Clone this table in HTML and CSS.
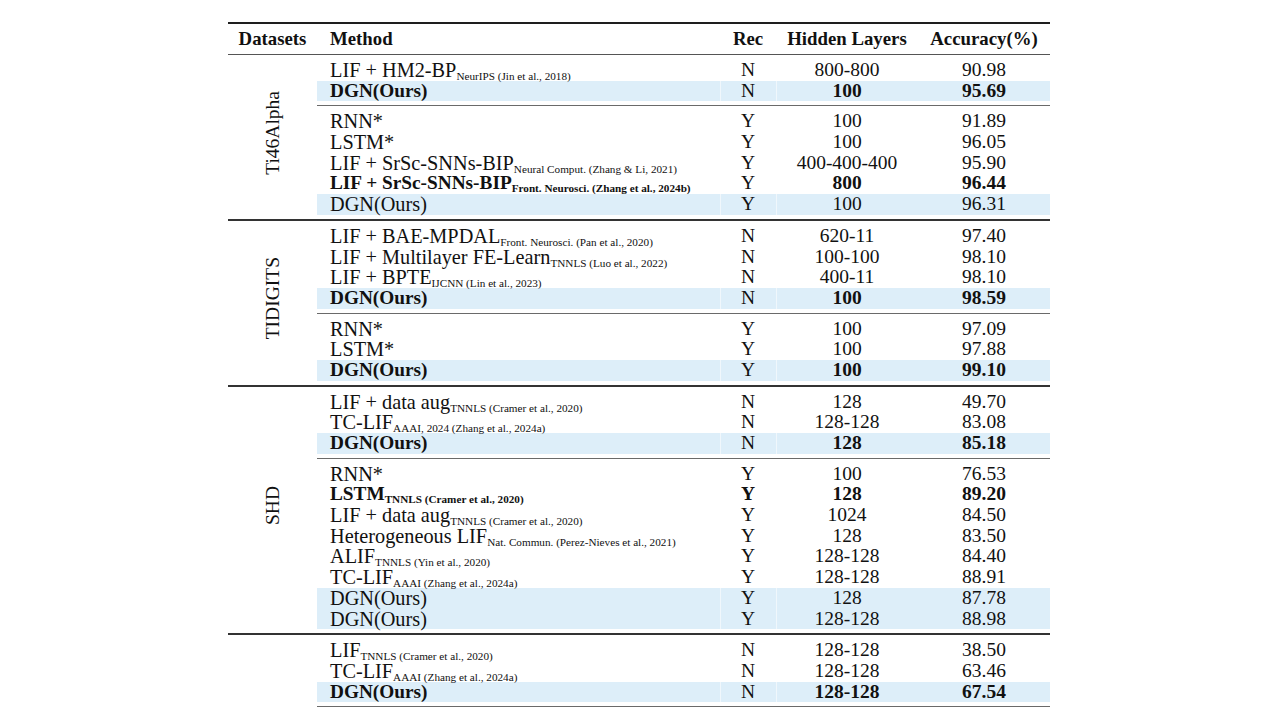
FILE: index.html
```html
<!DOCTYPE html>
<html>
<head>
<meta charset="utf-8">
<link rel="stylesheet" href="styles.css">
</head>
<body>
<div class="table">
  <div class="toprule"></div>
  <div class="head">
    <span class="c">Datasets</span>
    <span class="m">Method</span>
    <span class="c">Rec</span>
    <span class="c">Hidden Layers</span>
    <span class="c">Accuracy(%)</span>
  </div>
  <div class="midrule"></div>

  <div class="group">
    <div class="ds"><span>Ti46Alpha</span></div>
    <div class="body">
      <div class="block">
        <div class="row"><span class="m">LIF + HM2-BP<span class="ref">NeurIPS (Jin et al., 2018)</span></span><span class="c">N</span><span class="c">800-800</span><span class="c">90.98</span></div>
        <div class="row hl"><span class="m b">DGN(Ours)</span><span class="c">N</span><span class="c b">100</span><span class="c b">95.69</span></div>
      </div>
      <div class="cmid"></div>
      <div class="block">
        <div class="row"><span class="m">RNN*</span><span class="c">Y</span><span class="c">100</span><span class="c">91.89</span></div>
        <div class="row"><span class="m">LSTM*</span><span class="c">Y</span><span class="c">100</span><span class="c">96.05</span></div>
        <div class="row"><span class="m">LIF + SrSc-SNNs-BIP<span class="ref">Neural Comput. (Zhang &amp; Li, 2021)</span></span><span class="c">Y</span><span class="c">400-400-400</span><span class="c">95.90</span></div>
        <div class="row"><span class="m b">LIF + SrSc-SNNs-BIP<span class="ref">Front. Neurosci. (Zhang et al., 2024b)</span></span><span class="c">Y</span><span class="c b">800</span><span class="c b">96.44</span></div>
        <div class="row hl"><span class="m">DGN(Ours)</span><span class="c">Y</span><span class="c">100</span><span class="c">96.31</span></div>
      </div>
    </div>
  </div>
  <div class="fullrule"></div>

  <div class="group">
    <div class="ds"><span>TIDIGITS</span></div>
    <div class="body">
      <div class="block">
        <div class="row"><span class="m">LIF + BAE-MPDAL<span class="ref">Front. Neurosci. (Pan et al., 2020)</span></span><span class="c">N</span><span class="c">620-11</span><span class="c">97.40</span></div>
        <div class="row"><span class="m">LIF + Multilayer FE-Learn<span class="ref">TNNLS (Luo et al., 2022)</span></span><span class="c">N</span><span class="c">100-100</span><span class="c">98.10</span></div>
        <div class="row"><span class="m">LIF + BPTE<span class="ref">IJCNN (Lin et al., 2023)</span></span><span class="c">N</span><span class="c">400-11</span><span class="c">98.10</span></div>
        <div class="row hl"><span class="m b">DGN(Ours)</span><span class="c">N</span><span class="c b">100</span><span class="c b">98.59</span></div>
      </div>
      <div class="cmid"></div>
      <div class="block">
        <div class="row"><span class="m">RNN*</span><span class="c">Y</span><span class="c">100</span><span class="c">97.09</span></div>
        <div class="row"><span class="m">LSTM*</span><span class="c">Y</span><span class="c">100</span><span class="c">97.88</span></div>
        <div class="row hl"><span class="m b">DGN(Ours)</span><span class="c">Y</span><span class="c b">100</span><span class="c b">99.10</span></div>
      </div>
    </div>
  </div>
  <div class="fullrule"></div>

  <div class="group">
    <div class="ds"><span>SHD</span></div>
    <div class="body">
      <div class="block">
        <div class="row"><span class="m">LIF + data aug<span class="ref">TNNLS (Cramer et al., 2020)</span></span><span class="c">N</span><span class="c">128</span><span class="c">49.70</span></div>
        <div class="row"><span class="m">TC-LIF<span class="ref">AAAI, 2024 (Zhang et al., 2024a)</span></span><span class="c">N</span><span class="c">128-128</span><span class="c">83.08</span></div>
        <div class="row hl"><span class="m b">DGN(Ours)</span><span class="c">N</span><span class="c b">128</span><span class="c b">85.18</span></div>
      </div>
      <div class="cmid"></div>
      <div class="block">
        <div class="row"><span class="m">RNN*</span><span class="c">Y</span><span class="c">100</span><span class="c">76.53</span></div>
        <div class="row"><span class="m b">LSTM<span class="ref">TNNLS (Cramer et al., 2020)</span></span><span class="c b">Y</span><span class="c b">128</span><span class="c b">89.20</span></div>
        <div class="row"><span class="m">LIF + data aug<span class="ref">TNNLS (Cramer et al., 2020)</span></span><span class="c">Y</span><span class="c">1024</span><span class="c">84.50</span></div>
        <div class="row"><span class="m">Heterogeneous LIF<span class="ref">Nat. Commun. (Perez-Nieves et al., 2021)</span></span><span class="c">Y</span><span class="c">128</span><span class="c">83.50</span></div>
        <div class="row"><span class="m">ALIF<span class="ref">TNNLS (Yin et al., 2020)</span></span><span class="c">Y</span><span class="c">128-128</span><span class="c">84.40</span></div>
        <div class="row"><span class="m">TC-LIF<span class="ref">AAAI (Zhang et al., 2024a)</span></span><span class="c">Y</span><span class="c">128-128</span><span class="c">88.91</span></div>
        <div class="row hl"><span class="m">DGN(Ours)</span><span class="c">Y</span><span class="c">128</span><span class="c">87.78</span></div>
        <div class="row hl"><span class="m">DGN(Ours)</span><span class="c">Y</span><span class="c">128-128</span><span class="c">88.98</span></div>
      </div>
    </div>
  </div>
  <div class="fullrule"></div>

  <div class="group">
    <div class="ds"></div>
    <div class="body">
      <div class="block">
        <div class="row"><span class="m">LIF<span class="ref">TNNLS (Cramer et al., 2020)</span></span><span class="c">N</span><span class="c">128-128</span><span class="c">38.50</span></div>
        <div class="row"><span class="m">TC-LIF<span class="ref">AAAI (Zhang et al., 2024a)</span></span><span class="c">N</span><span class="c">128-128</span><span class="c">63.46</span></div>
        <div class="row hl"><span class="m b">DGN(Ours)</span><span class="c">N</span><span class="c b">128-128</span><span class="c b">67.54</span></div>
      </div>
      <div class="cmid"></div>
    </div>
  </div>
</div>
</body>
</html>
```

FILE: styles.css
```css
html, body {
  margin: 0;
  padding: 0;
  background: #ffffff;
  overflow: hidden;
}

body {
  font-family: "Liberation Serif", "Times New Roman", serif;
  color: #111111;
}

.table {
  width: 822px;
  margin: 22px 0 0 228px;
  font-size: 19.5px;
}

.toprule {
  border-top: 2px solid #1e1e1e;
}

.midrule {
  border-top: 1px solid #555555;
}

.fullrule {
  border-top: 2px solid #333333;
}

.cmid {
  border-top: 1px solid #6a6a6a;
}

.head {
  display: grid;
  grid-template-columns: 89px 403px 56px 142px 132px;
  height: 30px;
  line-height: 30px;
  font-size: 18.8px;
  font-weight: bold;
}

.group {
  display: flex;
}

.ds {
  width: 89px;
  flex: none;
  display: flex;
  align-items: center;
  justify-content: center;
  padding-bottom: 9px;
  box-sizing: border-box;
}

.ds span {
  writing-mode: vertical-rl;
  transform: rotate(180deg);
  line-height: 1;
}

.body {
  flex: 1;
}

.block {
  padding: 5px 0 4px;
}

.row {
  display: grid;
  grid-template-columns: 403px 56px 142px 132px;
  height: 20.7px;
  line-height: 20.7px;
}

.m {
  padding-left: 13px;
  white-space: nowrap;
  font-size: 20.3px;
}

.m.b {
  font-size: 19.3px;
}

.c {
  text-align: center;
  white-space: nowrap;
}

.head .m {
  font-size: 18.8px;
}

.b {
  font-weight: bold;
}

.hl {
  background: #ddeef9;
}

.hl > span + span {
  box-shadow: inset 1px 0 0 rgba(255, 255, 255, 0.55);
}

.hl > span + span + span + span {
  box-shadow: none;
}

.ref {
  font-size: 11.2px;
  vertical-align: -3px;
  line-height: 0;
}
```
